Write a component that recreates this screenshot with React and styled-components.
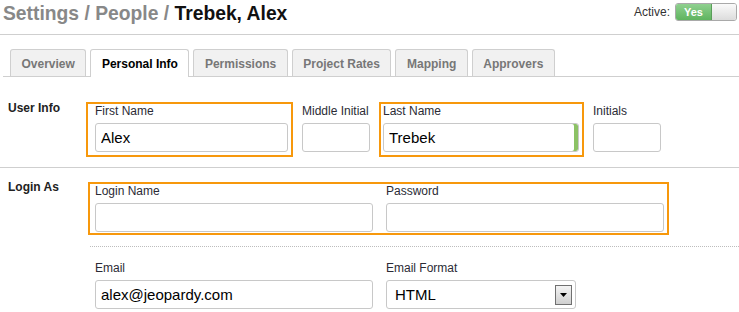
import React from 'react';
import styled, { createGlobalStyle } from 'styled-components';

const tabs = ['Overview', 'Personal Info', 'Permissions', 'Project Rates', 'Mapping', 'Approvers'];

const App = () => {
  return (
    <Page>
      <GlobalStyle />
      <Header>
        <Title>
          <Crumb>Settings / People / </Crumb>Trebek, Alex
        </Title>
        <ActiveWrap>
          Active:
          <Toggle>
            <ToggleOn>Yes</ToggleOn>
            <ToggleKnob />
          </Toggle>
        </ActiveWrap>
      </Header>

      <TabBar>
        {tabs.map((t) => (
          <Tab key={t} $active={t === 'Personal Info'}>{t}</Tab>
        ))}
      </TabBar>

      <Section $top={25} $bottom={10} $border="1px solid #cfcfcf">
        <SectionLabel>User Info</SectionLabel>
        <FieldRow>
          <Box $on $pad="0 3px 3px 7px">
            <Field label="First Name" value="Alex" width={193} />
          </Box>
          <Box>
            <Field label="Middle Initial" width={68} />
          </Box>
          <Box $on $pad="0 3px 3px 2px">
            <Field label="Last Name" value="Trebek" width={196} valid />
          </Box>
          <Box>
            <Field label="Initials" width={68} />
          </Box>
        </FieldRow>
      </Section>

      <Section $top={13} $bottom={0}>
        <SectionLabel>Login As</SectionLabel>
        <div>
          <Box $on $pad="0 3px 1px 5px" $shift={2} $fit>
            <Pair>
              <Field label="Login Name" width={278} />
              <Field label="Password" width={278} type="password" />
            </Pair>
          </Box>
          <DottedRule />
          <Pair $indent={9}>
            <Field label="Email" value="alex@jeopardy.com" width={278} />
            <FieldWrap>
              <FieldLabel>Email Format</FieldLabel>
              <SelectBox>
                <span>HTML</span>
                <DropButton>
                  <svg width="7" height="4" viewBox="0 0 7 4">
                    <path d="M0 0 L7 0 L3.5 4 Z" fill="#000" />
                  </svg>
                </DropButton>
              </SelectBox>
            </FieldWrap>
          </Pair>
        </div>
      </Section>
    </Page>
  );
};

export default App;

function Field({ label, value, width, valid, type }) {
  return (
    <FieldWrap>
      <FieldLabel>{label}</FieldLabel>
      <TextInput type={type || 'text'} defaultValue={value} $w={width} $valid={valid} />
    </FieldWrap>
  );
}

const GlobalStyle = createGlobalStyle`
  body {
    margin: 0;
    background: #fff;
    font-family: "Liberation Sans", Arial, sans-serif;
    color: #333;
  }
`;

const Page = styled.div`
  width: 739px;
`;

const Header = styled.div`
  display: flex;
  justify-content: space-between;
  align-items: flex-start;
  height: 31px;
  padding: 3px 2px 0 3px;
  border-bottom: 1px solid #cfcfcf;
`;

const Title = styled.h1`
  margin: 0;
  font-size: 19.3px;
  line-height: 22px;
  font-weight: bold;
  color: #111;
`;

const Crumb = styled.span`
  color: #888;
`;

const ActiveWrap = styled.div`
  display: flex;
  align-items: center;
  gap: 5px;
  font-size: 12px;
  line-height: 18px;
  color: #333;
`;

const Toggle = styled.div`
  display: flex;
  width: 62px;
  height: 18px;
  box-sizing: border-box;
  border: 1px solid #a9a9a9;
  border-radius: 3px;
  overflow: hidden;
`;

const ToggleOn = styled.div`
  width: 35px;
  background: linear-gradient(#8fd08f, #5fb45f);
  border-right: 1px solid #5a9e5a;
  color: #fff;
  font-size: 11px;
  font-weight: bold;
  line-height: 16px;
  text-align: center;
`;

const ToggleKnob = styled.div`
  flex: 1;
  background: linear-gradient(#fafafa, #dcdcdc);
`;

const TabBar = styled.div`
  display: flex;
  align-items: flex-end;
  gap: 4px;
  margin: 14px 0 0 3px;
  padding-left: 7px;
  border-bottom: 1px solid #cfcfcf;
`;

const Tab = styled.div`
  box-sizing: border-box;
  height: ${(p) => (p.$active ? '28px' : '27px')};
  margin-bottom: ${(p) => (p.$active ? '-1px' : '0')};
  padding: 1px 10.5px 0;
  border: 1px solid #cfcfcf;
  border-bottom: none;
  border-radius: 3px 3px 0 0;
  background: ${(p) => (p.$active ? '#fff' : '#f1f1f1')};
  color: ${(p) => (p.$active ? '#000' : '#777')};
  font-size: 12px;
  font-weight: bold;
  line-height: 26px;
`;

const Section = styled.div`
  display: grid;
  grid-template-columns: 86px 1fr;
  padding: ${(p) => p.$top}px 0 ${(p) => p.$bottom}px;
  border-bottom: ${(p) => p.$border || 'none'};
`;

const SectionLabel = styled.div`
  padding-left: 8px;
  margin-top: -1px;
  font-size: 12px;
  line-height: 14px;
  font-weight: bold;
  color: #222;
`;

const FieldRow = styled.div`
  display: flex;
  align-items: flex-start;
  gap: 7px;
`;

const Box = styled.div`
  display: ${(p) => (p.$fit ? 'inline-block' : 'block')};
  margin-left: ${(p) => p.$shift || 0}px;
  padding: ${(p) => p.$pad || '0'};
  border: 2px solid ${(p) => (p.$on ? '#f7980c' : 'transparent')};
`;

const Pair = styled.div`
  display: flex;
  gap: 13px;
  padding-left: ${(p) => p.$indent || 0}px;
`;

const FieldWrap = styled.div`
  display: flex;
  flex-direction: column;
`;

const FieldLabel = styled.label`
  font-size: 12px;
  line-height: 14px;
  color: #2b2b35;
  margin-bottom: 5px;
`;

const TextInput = styled.input`
  box-sizing: border-box;
  width: ${(p) => p.$w}px;
  height: 29px;
  margin: 0;
  padding: 0 5px;
  border: 1px solid #c8c8c8;
  border-radius: 3px;
  font-family: "Liberation Sans", Arial, sans-serif;
  font-size: 15px;
  color: #000;
  outline: none;
  box-shadow: ${(p) => (p.$valid ? 'inset -4px 0 0 #8cc265' : 'none')};
`;

const DottedRule = styled.div`
  margin: 11px 0 14px 4px;
  border-top: 1px dotted #bdbdbd;
`;

const SelectBox = styled.div`
  box-sizing: border-box;
  display: flex;
  align-items: center;
  justify-content: space-between;
  width: 190px;
  height: 29px;
  padding: 0 3px 0 8px;
  border: 1px solid #c8c8c8;
  border-radius: 3px;
  font-size: 15px;
  color: #000;
`;

const DropButton = styled.div`
  box-sizing: border-box;
  display: flex;
  align-items: center;
  justify-content: center;
  width: 17px;
  height: 20px;
  border: 1px solid #707070;
  background: linear-gradient(#f4f4f4, #cfcfcf);
`;
